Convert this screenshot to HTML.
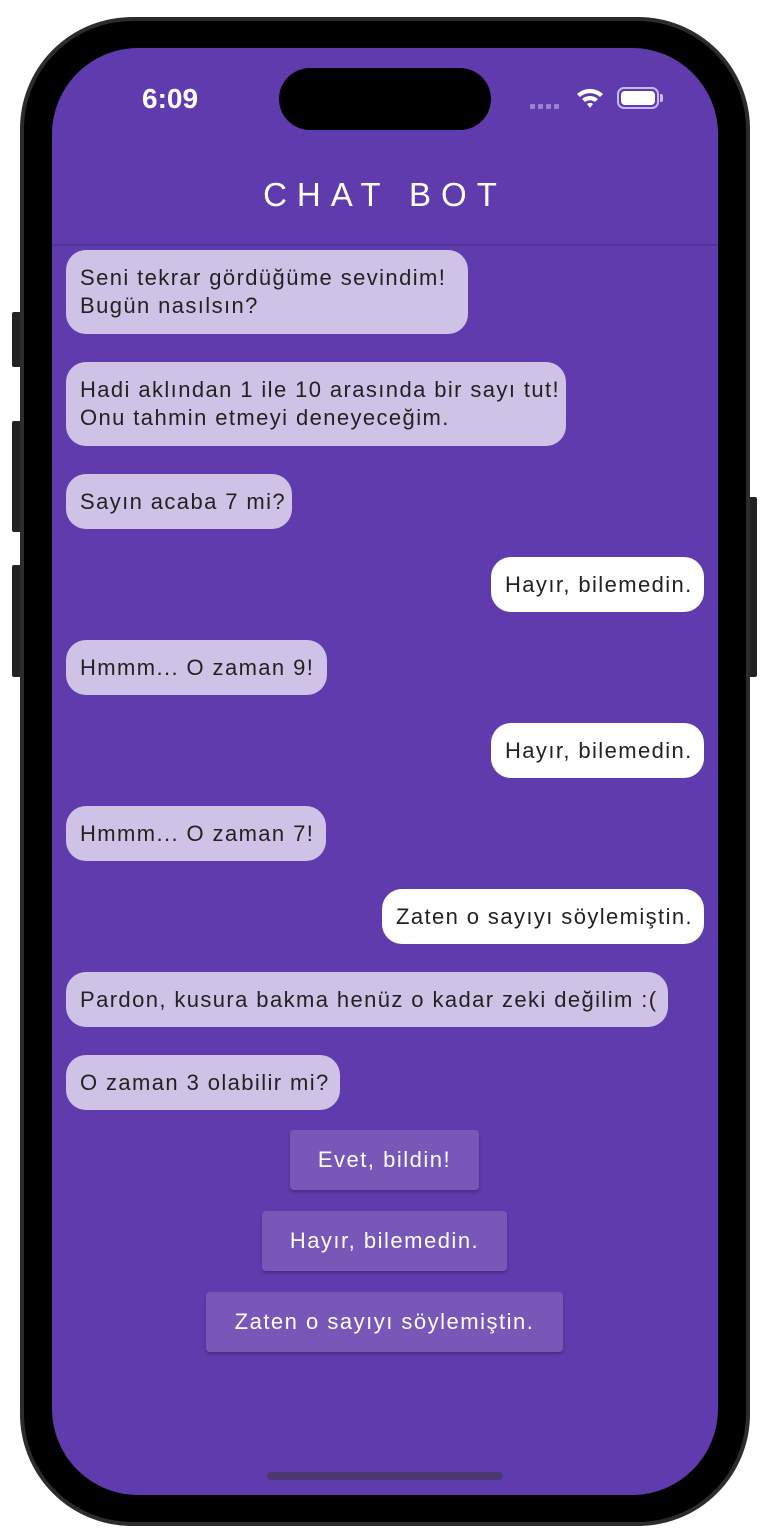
<!DOCTYPE html>
<html><head><meta charset="utf-8"><style>
*{margin:0;padding:0;box-sizing:border-box}
body{width:770px;height:1530px;background:#fff;position:relative;overflow:hidden;font-family:"Liberation Sans",sans-serif}
.frame{position:absolute;left:20px;top:17px;width:730px;height:1509px;border-radius:112px;background:#000;border:4px solid #2c2c2c}
.btn{position:absolute;background:#222;border-radius:2px}
.screen{position:absolute;left:52px;top:48px;width:666px;height:1447px;border-radius:86px;background:#5f3bad;overflow:hidden}
.island{position:absolute;left:227px;top:20px;width:212px;height:62px;border-radius:31px;background:#000}
.time{position:absolute;left:90px;top:35px;color:#fff;font-size:28px;font-weight:bold}
.title{position:absolute;left:0;width:666px;top:128px;text-align:center;color:#fff;font-size:33px;letter-spacing:10px}
.div{position:absolute;left:0;width:666px;top:196px;height:2px;background:#52339a}
.b{position:absolute;height:55px;border-radius:20px;font-size:22px;letter-spacing:1.4px;color:#222;padding:0 14px;line-height:28px;display:flex;align-items:center;white-space:nowrap}
.l{background:#cec3e6;left:14px}
.r{background:#fff;right:14px}
.two{height:84px}
.ab{position:absolute;background:#7857b9;color:#fff;font-size:22px;letter-spacing:1.5px;height:60px;border-radius:4px;display:flex;align-items:center;justify-content:center;box-shadow:0 2px 3px rgba(0,0,0,.25)}
</style></head><body>
<div class="btn" style="left:12px;top:312px;width:9px;height:55px"></div>
<div class="btn" style="left:12px;top:421px;width:9px;height:111px"></div>
<div class="btn" style="left:12px;top:565px;width:9px;height:112px"></div>
<div class="btn" style="left:749px;top:497px;width:8px;height:180px"></div>
<div class="frame"></div>
<div class="screen">
<div class="island"></div>
<div class="time">6:09</div>
<div style="position:absolute;left:478px;top:56px;display:flex;gap:3px"><i style="width:5px;height:5px;background:#9a85cc;border-radius:1px"></i><i style="width:5px;height:5px;background:#9a85cc;border-radius:1px"></i><i style="width:5px;height:5px;background:#9a85cc;border-radius:1px"></i><i style="width:5px;height:5px;background:#9a85cc;border-radius:1px"></i></div>
<svg style="position:absolute;left:523px;top:38px" width="30" height="24" viewBox="0 0 30 24"><path d="M2 8a19 19 0 0 1 26 0l-3 3a15 15 0 0 0-20 0z" fill="#fff"/><path d="M7 13a12 12 0 0 1 16 0l-3 3a8 8 0 0 0-10 0z" fill="#fff"/><path d="M12 18a4.5 4.5 0 0 1 6 0l-3 4z" fill="#fff"/></svg>
<div style="position:absolute;left:565px;top:39px;width:42px;height:22px;border:2px solid #c8b8ec;border-radius:7px;padding:2px"><div style="width:100%;height:100%;background:#fff;border-radius:4px"></div></div>
<div style="position:absolute;left:608px;top:46px;width:3px;height:8px;background:#c8b8ec;border-radius:0 2px 2px 0"></div>
<div class="title">CHAT BOT</div>
<div class="div"></div>
<div class="b l two" style="top:202px;width:402px">Seni tekrar gördüğüme sevindim!<br>Bugün nasılsın?</div>
<div class="b l two" style="top:314px;width:500px">Hadi aklından 1 ile 10 arasında bir sayı tut!<br>Onu tahmin etmeyi deneyeceğim.</div>
<div class="b l" style="top:426px;width:226px">Sayın acaba 7 mi?</div>
<div class="b r" style="top:509px;width:213px">Hayır, bilemedin.</div>
<div class="b l" style="top:592px;width:261px">Hmmm... O zaman 9!</div>
<div class="b r" style="top:675px;width:213px">Hayır, bilemedin.</div>
<div class="b l" style="top:758px;width:260px">Hmmm... O zaman 7!</div>
<div class="b r" style="top:841px;width:322px">Zaten o sayıyı söylemiştin.</div>
<div class="b l" style="top:924px;width:602px">Pardon, kusura bakma henüz o kadar zeki değilim :(</div>
<div class="b l" style="top:1007px;width:274px">O zaman 3 olabilir mi?</div>
<div class="ab" style="left:238px;top:1082px;width:189px">Evet, bildin!</div>
<div class="ab" style="left:210px;top:1163px;width:245px">Hayır, bilemedin.</div>
<div class="ab" style="left:154px;top:1244px;width:357px">Zaten o sayıyı söylemiştin.</div>
<div style="position:absolute;left:215px;top:1424px;width:236px;height:8px;border-radius:4px;background:#4a3870"></div>
</div>
</body></html>
